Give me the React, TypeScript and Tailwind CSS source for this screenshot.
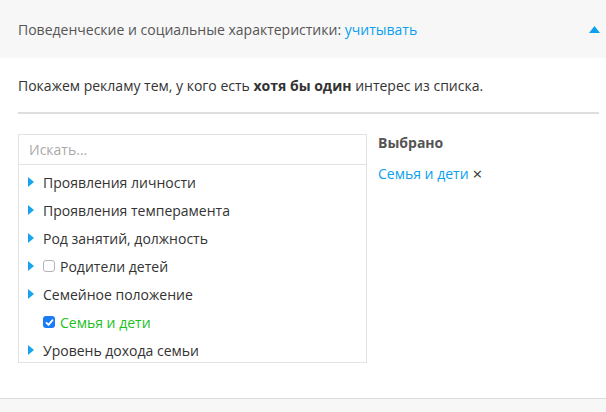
import React from 'react';

const font = { fontFamily: '"Open Sans", "Noto Sans", sans-serif' };

type Item = { label: string; arrow: boolean; checkbox?: 'off' | 'on' };

const items: Item[] = [
  { label: 'Проявления личности', arrow: true },
  { label: 'Проявления темперамента', arrow: true },
  { label: 'Род занятий, должность', arrow: true },
  { label: 'Родители детей', arrow: true, checkbox: 'off' },
  { label: 'Семейное положение', arrow: true },
  { label: 'Семья и дети', arrow: false, checkbox: 'on' },
  { label: 'Уровень дохода семьи', arrow: true },
];

const Arrow = () => (
  <svg width="6" height="10" viewBox="0 0 6 10" className="shrink-0">
    <path d="M0 0 L6 5 L0 10 Z" fill="#1aa3f0" />
  </svg>
);

const Row: React.FC<{ item: Item }> = ({ item }) => (
  <div className="flex h-[28px] items-center pl-[9px]">
    <div className="w-[15px] shrink-0">{item.arrow && <Arrow />}</div>
    {item.checkbox === 'off' && (
      <span className="mr-[5px] h-[12px] w-[12px] shrink-0 rounded-[3px] border border-[#b5b5b5] bg-white" />
    )}
    {item.checkbox === 'on' && (
      <span className="mr-[5px] flex h-[12px] w-[12px] shrink-0 items-center justify-center rounded-[3px] bg-[#1a7cf5]">
        <svg width="9" height="9" viewBox="0 0 9 9">
          <path d="M1.5 4.8 L3.6 6.8 L7.5 2.2" stroke="white" strokeWidth="1.8" fill="none" strokeLinecap="round" strokeLinejoin="round" />
        </svg>
      </span>
    )}
    <span className={`text-[14px] ${item.checkbox === 'on' ? 'text-[#1cc11c]' : 'text-[#333]'}`}>{item.label}</span>
  </div>
);

export default function App() {
  return (
    <div style={font} className="h-[412px] w-[606px] overflow-hidden bg-white">
      <div className="flex h-[58px] items-center justify-between bg-[#f7f7f7] pl-[18px] pr-[6px]">
        <div className="text-[14px] text-[#555]">
          Поведенческие и социальные характеристики: <span className="text-[#0aa0ef]">учитывать</span>
        </div>
        <svg width="11" height="7" viewBox="0 0 11 7">
          <path d="M5.5 0 L11 7 L0 7 Z" fill="#0aa0ef" />
        </svg>
      </div>

      <div className="pl-[18px] pr-[7px] pt-[18px]">
        <p className="text-[14px] leading-[20px] text-[#333]">
          Покажем рекламу тем, у кого есть <b className="font-bold">хотя бы один</b> интерес из списка.
        </p>
        <div className="mt-[16px] h-[2px] bg-[#dedede]" />

        <div className="mt-[20px] flex gap-[11px]">
          <div className="w-[349px] border border-[#e3e3e3]">
            <div className="flex h-[30px] items-center border-b border-[#e3e3e3] px-[10px] text-[14px] text-[#aaa]">
              Искать...
            </div>
            <div className="h-[197px] overflow-hidden pt-[3px]">
              {items.map((it) => (
                <Row key={it.label} item={it} />
              ))}
            </div>
          </div>

          <div>
            <div className="text-[14px] font-bold leading-[18px] text-[#555]">Выбрано</div>
            <div className="mt-[13px] flex items-center text-[14px] leading-[18px]">
              <span className="text-[#0aa0ef]">Семья и дети</span>
              <span className="ml-[4px] text-[17px] leading-[18px] text-[#333]">×</span>
            </div>
          </div>
        </div>
      </div>

      <div className="mt-[35px] h-[20px] border-t border-[#dcdcdc] bg-[#f7f7f7]" />
    </div>
  );
}
